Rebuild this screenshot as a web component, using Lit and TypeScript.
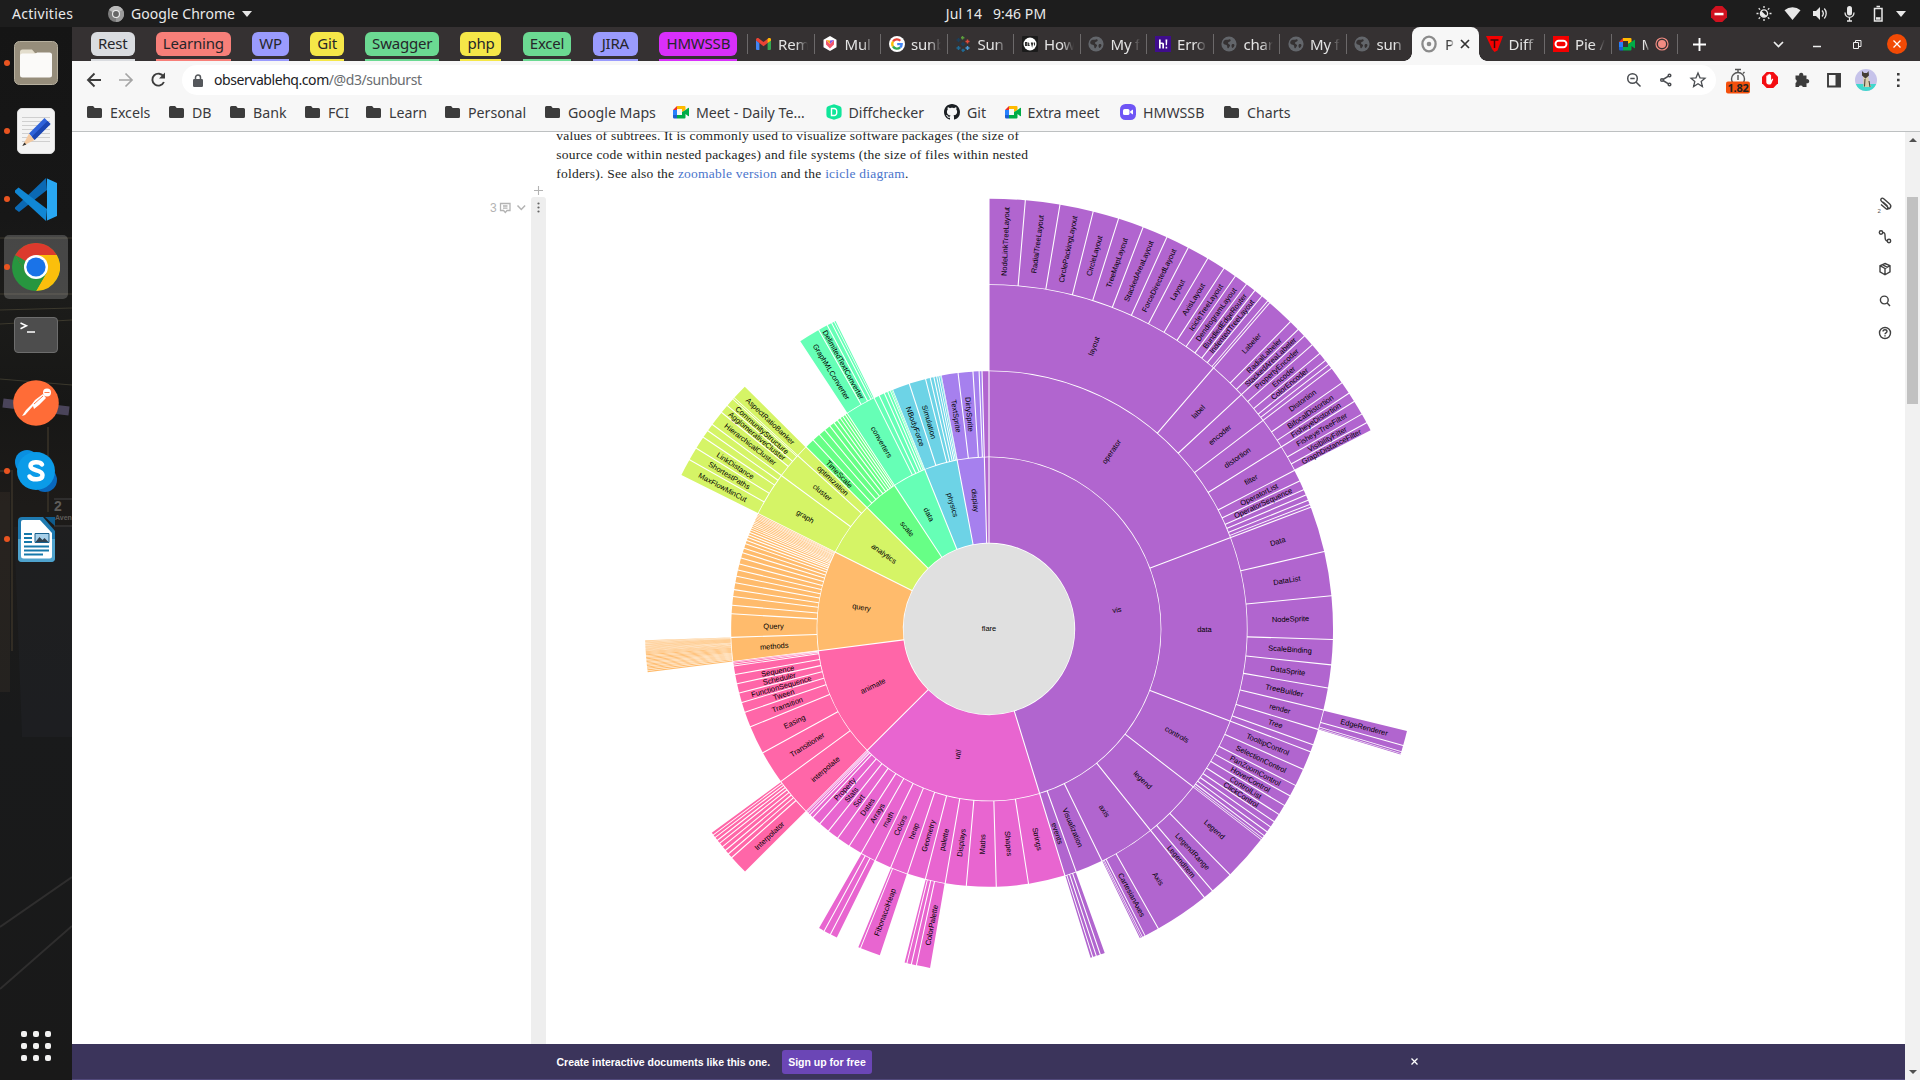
import { LitElement, html, css, svg, TemplateResult } from "lit";
import { customElement } from "lit/decorators.js";

/* ---------- data: package hierarchy ---------- */

type Leaf = [string, number];
type Branch = [string, Item[]];
type Item = Leaf | Branch;

const leaves = (s: string): Leaf[] =>
  s.trim().split(/\s+/).map((t) => {
    const [n, v] = t.split(":");
    return [n, Number(v)] as Leaf;
  });

const FLARE: Branch = ["flare", [
  ["analytics", [
    ["cluster", leaves("AgglomerativeCluster:3938 CommunityStructure:3812 HierarchicalCluster:6714 MergeEdge:743")],
    ["graph", leaves("BetweennessCentrality:3534 LinkDistance:5731 MaxFlowMinCut:7840 ShortestPaths:5914 SpanningTree:3416")],
    ["optimization", leaves("AspectRatioBanker:7074")],
  ]],
  ["animate", [
    ...leaves("Easing:17010 FunctionSequence:5842"),
    ["interpolate", leaves("ArrayInterpolator:1983 ColorInterpolator:2047 DateInterpolator:1375 Interpolator:8746 MatrixInterpolator:2202 NumberInterpolator:1382 ObjectInterpolator:1629 PointInterpolator:1675 RectangleInterpolator:2042")],
    ...leaves("ISchedulable:1041 Parallel:5176 Pause:449 Scheduler:5593 Sequence:5534 Transition:9201 Transitioner:19975 TransitionEvent:1116 Tween:6006"),
  ]],
  ["data", [
    ["converters", leaves("Converters:721 DelimitedTextConverter:4294 GraphMLConverter:9800 IDataConverter:1314 JSONConverter:2220")],
    ...leaves("DataField:1759 DataSchema:2165 DataSet:586 DataSource:3331 DataTable:772 DataUtil:3322"),
  ]],
  ["display", leaves("DirtySprite:8833 LineSprite:1732 RectSprite:3623 TextSprite:10066")],
  ["flex", leaves("FlareVis:4116")],
  ["physics", leaves("DragForce:1082 GravityForce:1336 IForce:319 NBodyForce:10498 Particle:2822 Simulation:9983 Spring:2213 SpringForce:1681")],
  ["query", [
    ...leaves("AggregateExpression:1616 And:1027 Arithmetic:3891 Average:891 BinaryExpression:2893 Comparison:5103 CompositeExpression:3677 Count:781 DateUtil:4141 Distinct:933 Expression:5130 ExpressionIterator:3617 Fn:3240 If:2732 IsA:2039 Literal:1214 Match:3748 Maximum:843"),
    ["methods", leaves("add:593 and:330 average:287 count:277 distinct:292 div:595 eq:594 fn:460 gt:603 gte:625 iff:748 isa:461 lt:597 lte:619 max:283 min:283 mod:591 mul:603 neq:599 not:386 or:323 orderby:307 range:772 select:296 stddev:363 sub:600 sum:280 update:307 variance:335 where:299 xor:354 _:264")],
    ...leaves("Minimum:843 Not:1554 Or:970 Query:13896 Range:1594 StringUtil:4130 Sum:791 Variable:1124 Variance:1876 Xor:1101"),
  ]],
  ["scale", leaves("IScaleMap:2105 LinearScale:1316 LogScale:3151 OrdinalScale:3770 QuantileScale:2435 QuantitativeScale:4839 RootScale:1756 Scale:4268 ScaleType:1821 TimeScale:5833")],
  ["util", [
    ...leaves("Arrays:8258 Colors:10001 Dates:8217 Displays:12555 Filter:2324 Geometry:10993"),
    ["heap", leaves("FibonacciHeap:9354 HeapNode:1233")],
    ...leaves("IEvaluable:335 IPredicate:383 IValueProxy:874"),
    ["math", leaves("DenseMatrix:3165 IMatrix:2815 SparseMatrix:3366")],
    ...leaves("Maths:17705 Orientation:1486"),
    ["palette", leaves("ColorPalette:6367 Palette:1229 ShapePalette:2059 SizePalette:2291")],
    ...leaves("Property:5559 Shapes:19118 Sort:6887 Stats:6557 Strings:22026"),
  ]],
  ["vis", [
    ["axis", leaves("Axes:1302 Axis:24593 AxisGridLine:652 AxisLabel:636 CartesianAxes:6703")],
    ["controls", leaves("AnchorControl:2138 ClickControl:3824 Control:1353 ControlList:4665 DragControl:2649 ExpandControl:2832 HoverControl:4896 IControl:763 PanZoomControl:5222 SelectionControl:7862 TooltipControl:8435")],
    ["data", [
      ...leaves("Data:20544 DataList:19788 DataSprite:10349 EdgeSprite:3301 NodeSprite:19382"),
      ["render", leaves("ArrowType:698 EdgeRenderer:5569 IRenderer:353 ShapeRenderer:2247")],
      ...leaves("ScaleBinding:11275 Tree:7147 TreeBuilder:9930"),
    ]],
    ["events", leaves("DataEvent:2313 SelectionEvent:1880 TooltipEvent:1701 VisualizationEvent:1117")],
    ["legend", leaves("Legend:20859 LegendItem:4614 LegendRange:10530")],
    ["operator", [
      ["distortion", leaves("BifocalDistortion:4461 Distortion:6314 FisheyeDistortion:3444")],
      ["encoder", leaves("ColorEncoder:3179 Encoder:4060 PropertyEncoder:4138 ShapeEncoder:1690 SizeEncoder:1830")],
      ["filter", leaves("FisheyeTreeFilter:5219 GraphDistanceFilter:3165 VisibilityFilter:3509")],
      ...leaves("IOperator:1286"),
      ["label", leaves("Labeler:9956 RadialLabeler:3899 StackedAreaLabeler:3202")],
      ["layout", leaves("AxisLayout:6725 BundledEdgeRouter:3727 CircleLayout:9317 CirclePackingLayout:12003 DendrogramLayout:4853 ForceDirectedLayout:8411 IcicleTreeLayout:4864 IndentedTreeLayout:3174 Layout:7881 NodeLinkTreeLayout:12870 PieLayout:2728 RadialTreeLayout:12348 RandomLayout:870 StackedAreaLayout:9121 TreeMapLayout:9191")],
      ...leaves("Operator:2490 OperatorList:5248 OperatorSequence:4190 OperatorSwitch:2581 SortOperator:2023"),
    ]],
    ...leaves("Visualization:16540"),
  ]],
]];

const BRANCH_COLORS: Record<string, string> = {
  vis: "#b165cf", util: "#e865d0", animate: "#ff66a8", query: "#ffbb6c", analytics: "#d5f466",
  scale: "#67ff86", data: "#66ffb6", physics: "#6dd3e6", display: "#a680ee", flex: "#b165cf",
};

/* ---------- partition layout ---------- */

interface Slice { name: string; depth: number; x0: number; x1: number; color: string; }

const RADIUS = 576;
const RING = RADIUS / 5;

const total = (n: Item): number =>
  typeof n[1] === "number" ? n[1] : n[1].reduce((s, c) => s + total(c), 0);

function partition(node: Item, depth: number, x0: number, x1: number, color: string, out: Slice[]) {
  out.push({ name: node[0], depth, x0, x1, color });
  if (typeof node[1] === "number") return;
  const sum = total(node);
  let x = x0;
  for (const child of [...node[1]].sort((a, b) => total(b) - total(a))) {
    const w = ((x1 - x0) * total(child)) / sum;
    partition(child, depth + 1, x, x + w, depth === 0 ? BRANCH_COLORS[child[0]] : color, out);
    x += w;
  }
}

const SLICES: Slice[] = [];
partition(FLARE, 0, 0, 2 * Math.PI, "#e0e0e0", SLICES);

function arcPath(d: Slice): string {
  const r0 = d.depth * RING;
  const r1 = r0 + RING - 1;
  const pad = Math.min((d.x1 - d.x0) / 2, 0.005) / 2;
  const p0 = Math.asin((RADIUS / 2 / r0) * Math.sin(pad));
  const p1 = Math.asin((RADIUS / 2 / r1) * Math.sin(pad));
  const pt = (a: number, r: number) => `${(r * Math.sin(a)).toFixed(3)},${(-r * Math.cos(a)).toFixed(3)}`;
  const big = d.x1 - d.x0 > Math.PI ? 1 : 0;
  return `M${pt(d.x0 + p1, r1)}A${r1},${r1} 0 ${big} 1 ${pt(d.x1 - p1, r1)}L${pt(d.x1 - p0, r0)}A${r0},${r0} 0 ${big} 0 ${pt(d.x0 + p0, r0)}Z`;
}

@customElement("sunburst-chart")
class SunburstChart extends LitElement {
  static styles = css`
    :host { display: block; }
    svg { display: block; width: 862px; height: 835px; margin-left: 0.850px; }
    .labels { font: 10px "Liberation Sans", Arial, sans-serif; text-anchor: middle; fill: #000; }
  `;
  render() {
    return html`<svg viewBox="-576 -576 1152 1116">
      <circle r=${RING - 1} fill="#e0e0e0"></circle>
      ${SLICES.filter((d) => d.depth).map((d) => svg`<path d=${arcPath(d)} fill=${d.color}></path>`)}
      <g class="labels">
        <text dy="0.3em">flare</text>
        ${SLICES.filter((d) => d.depth && (d.depth + 0.5) * RING * (d.x1 - d.x0) > 10).map((d) => {
          const a = (((d.x0 + d.x1) / 2) * 180) / Math.PI;
          return svg`<text transform="rotate(${a - 90}) translate(${(d.depth + 0.5) * RING},0) rotate(${a < 180 ? 0 : 180})" dy="0.35em">${d.name}</text>`;
        })}
      </g>
    </svg>`;
  }
}

/* ---------- shared icons ---------- */

const folder = html`<svg width="15" height="14" viewBox="0 0 15 14"><path fill="#3c3c3c" d="M1.5 1h4.6l1.6 1.9h5.8A1.5 1.5 0 0 1 15 4.400V11.500A1.500 1.500 0 0 1 13.500 13h-12A1.500 1.500 0 0 1 0 11.500V2.500A1.500 1.500 0 0 1 1.500 1z"/></svg>`;
const meet = html`<svg width="16" height="14" viewBox="0 0 16 14"><path fill="#ffba00" d="M4 1h7.500a1 1 0 0 1 1 1v3L9 7V4H4z"/><path fill="#e92e2a" d="M0 5l4-4v4z"/><path fill="#2680fc" d="M0 5h4v5H0z"/><path fill="#1a5fd0" d="M0 10h4v3.500H1.200A1.200 1.200 0 0 1 0 12.300z"/><path fill="#00ac47" d="M4 10h5V7l3.500-2 2.600-2.100c.4-.3.9-.1.9.4v7.400c0 .5-.5.700-.9.400L12.500 9v3.500a1 1 0 0 1-1 1H4z"/></svg>`;
const diffcheck = html`<svg width="16" height="16" viewBox="0 0 16 16"><path fill="#10e69a" d="M8 .3 13.400 2a3 3 0 0 1 2.200 3v6a3 3 0 0 1-2.200 3L8 15.700 2.600 14a3 3 0 0 1-2.200-3V5a3 3 0 0 1 2.200-3z"/><path fill="none" stroke="#fff" stroke-width="1.400" d="M5.500 4.500h2.700a2.500 2.500 0 0 1 2.500 2.500v2a2.500 2.500 0 0 1-2.500 2.500H5.500z"/></svg>`;
const github = html`<svg width="16" height="16" viewBox="0 0 16 16"><path fill="#1b1f23" d="M8 0C3.580 0 0 3.580 0 8c0 3.540 2.290 6.530 5.470 7.590.4.070.55-.17.55-.38 0-.19-.01-.82-.01-1.490-2.010.37-2.530-.49-2.690-.94-.09-.23-.48-.94-.82-1.130-.28-.15-.68-.52-.01-.53.63-.01 1.080.58 1.230.82.72 1.210 1.870.87 2.330.66.07-.52.28-.87.51-1.070-1.780-.2-3.640-.89-3.640-3.950 0-.87.31-1.590.82-2.150-.08-.2-.36-1.020.08-2.120 0 0 .67-.21 2.200.82.64-.18 1.320-.27 2-.27s1.360.09 2 .27c1.530-1.040 2.200-.82 2.200-.82.44 1.100.16 1.920.08 2.120.51.56.82 1.270.82 2.150 0 3.070-1.870 3.750-3.650 3.950.29.25.54.73.54 1.480 0 1.070-.01 1.930-.01 2.200 0 .21.15.46.55.38A8.010 8.010 0 0 0 16 8c0-4.420-3.580-8-8-8z"/></svg>`;
const camera = html`<svg width="16" height="16" viewBox="0 0 16 16"><rect width="16" height="16" rx="5.500" fill="#6f55f5"/><rect x="3" y="5" width="6.500" height="6" rx="1.600" fill="#fff"/><path fill="#fff" d="m10.200 7.200 2.800-1.700v5l-2.800-1.700z"/></svg>`;

const globe = html`<svg width="16" height="16" viewBox="0 0 16 16"><circle cx="8" cy="8" r="7.600" fill="#63666b"/><path fill="#353132" d="M3.500 4.200c2-.9 3.300.1 4.300-.7 1.200-1 2.300.2 1.800 1.300-.6 1.300-2.400.8-2.600 2.100-.1 1 1.200 1.100 1.900 1.900.6.900-.5 2-1.100 2.900-.7 1-1.500.7-1.500-.5 0-1.500-.5-2.200-1.600-2.500C3.200 8.300 2 7.700 2.200 6.400c.2-.9.500-1.800 1.300-2.200z"/><path fill="#353132" d="M11 8.300c1.100-.5 2.300-.1 2.500.9-.5 1.800-1.300 2.600-2.300 2.800-.8-.9-1-2.800-.2-3.700z"/></svg>`;
const gmail = html`<svg width="15" height="12" viewBox="0 0 15 12"><path fill="#4285f4" d="M0 2v9a1 1 0 0 0 1 1h2.400V5z"/><path fill="#34a853" d="M11.600 12H14a1 1 0 0 0 1-1V2l-3.400 3z"/><path fill="#ea4335" d="M0 1.800C0 .3 1.700-.4 2.900.5L7.500 4 12.100.5C13.300-.4 15 .3 15 1.800v.6l-3.400 2.700L7.500 8.200 3.400 5.100 0 2.400z"/><path fill="#fbbc04" d="M11.600 1v4L15 2.400v-.6C15 .300 13.300-.400 12.100.500z"/></svg>`;
const shield = html`<svg width="14" height="15" viewBox="0 0 14 15"><path fill="#fff" d="M7 0l6.500 3.700v7.500L7 15 .5 11.200V3.700z"/><path fill="#f2566c" d="M3 4l4 4 4-4v4.500L7 12.500 3 8.500z"/><path fill="#f7a51d" d="M3 4l4 4v-3.500z"/><path fill="#8353e0" d="M11 4 7 8V4.500z"/></svg>`;
const google = html`<svg width="16" height="16" viewBox="0 0 16 16"><circle cx="8" cy="8" r="8" fill="#fff"/><g fill="none" stroke-width="2.300"><path stroke="#ea4335" d="M4 5.500A4.700 4.700 0 0 1 11.300 4.700"/><path stroke="#fbbc05" d="M4 5.500a4.700 4.700 0 0 0 0 5"/><path stroke="#34a853" d="M4 10.500a4.700 4.700 0 0 0 7.100.9"/><path stroke="#4285f4" d="M8.200 8.200h4.500c0 1.300-.6 2.400-1.600 3.200"/></g></svg>`;
const tableau = html`<svg width="16" height="16" viewBox="0 0 16 16" fill="none" stroke-width="1.500"><path stroke="#1f6b96" d="M3.500 10v4M1.500 12h4M8 12.800V16M6.500 14.300h3.400"/><path stroke="#1b3f5c" d="M3.500 2v4M1.500 4h4M6 8h4M8 6v4"/><path stroke="#e04a3a" d="M12.500 3.500v4M10.500 5.500h4"/><path stroke="#5b9a3c" d="M7.500 0v3.400M6 1.700h3.400"/><path stroke="#4a9bd6" d="M12.500 10v4M10.500 12h4"/></svg>`;
const dev = html`<svg width="16" height="16" viewBox="0 0 16 16"><rect width="16" height="16" rx="1" fill="#1b1b1b"/><circle cx="8" cy="8" r="6.500" fill="#fff"/><path stroke="#333" stroke-width="1.100" fill="none" d="M3.500 6.500h1.200v3H3.500zM6.300 6.500v3h1.400M6.300 8h1.200M9.300 6.500l.8 3 .8-3M12.500 6.500v3"/></svg>`;
const hex = html`<svg width="16" height="16" viewBox="0 0 16 16"><rect width="16" height="16" fill="#3f0d8c"/><path fill="#fff" d="M4 3.500h1.700v3h1.500c1.300 0 1.800.8 1.800 1.800v4.200H7.300V8.600c0-.5-.2-.7-.7-.7h-.9v4.600H4zM10.500 3.500h1.800l-.3 5.800h-1.200zM10.600 10.700h1.600v1.700h-1.600z"/></svg>`;
const observable = html`<svg width="16" height="18" viewBox="0 0 16 18"><ellipse cx="8" cy="9" rx="6.600" ry="7.300" fill="none" stroke="#8b8b8b" stroke-width="2.300"/><circle cx="8" cy="9" r="2.300" fill="#8b8b8b"/></svg>`;
const tri = html`<svg width="17" height="16" viewBox="0 0 17 16"><path fill="#f40000" d="M0 0h17l-5.500 14.500L8.500 16 6 13z"/><path stroke="#3a0808" stroke-width="1.500" fill="none" d="M4.500 4h8M8.500 4v8"/></svg>`;
const oracle = html`<svg width="16" height="16" viewBox="0 0 16 16"><rect width="16" height="16" fill="#f40000"/><rect x="2.500" y="4.800" width="11" height="6.400" rx="3.200" fill="none" stroke="#fff" stroke-width="1.900"/></svg>`;

/* ---------- desktop top bar ---------- */

@customElement("desktop-bar")
class DesktopBar extends LitElement {
  static styles = css`
    :host { display: grid; grid-template-columns: 1fr auto 1fr; align-items: center; height: 27px; background: #1d1d1d; color: #eaeaea; font: 14px "Noto Sans", sans-serif; }
    .left, .right { display: flex; align-items: center; }
    .left { padding-left: 12px; }
    .activities { width: 96px; letter-spacing: 0.3px; }
    .app { margin-left: 7px; letter-spacing: 0.05px; }
    .caret { margin-left: 7px; }
    .clock { display: flex; gap: 11px; transform: translateX(36px); letter-spacing: 0.080px; }
    .right { justify-content: flex-end; padding-right: 5px; }
    .right svg { flex: none; }
  `;
  render() {
    return html`
      <div class="left">
        <span class="activities">Activities</span>
        <svg width="16" height="16" viewBox="0 0 16 16"><circle cx="8" cy="8" r="8" fill="#7d7d7d"/><path fill="#b9b9b9" d="M8 8 1 4a8 8 0 0 1 14 0z"/><path fill="#9a9a9a" d="M8 8l7-4a8 8 0 0 1-7 12z"/><circle cx="8" cy="8" r="4" fill="#eee"/><circle cx="8" cy="8" r="2.900" fill="#666"/></svg>
        <span class="app">Google Chrome</span>
        <svg class="caret" width="10" height="6" viewBox="0 0 10 6"><path fill="#e6e6e6" d="M0 0h10L5 6z"/></svg>
      </div>
      <div class="clock"><span>Jul 14</span><span>9:46 PM</span></div>
      <div class="right">
        <svg width="16" height="16" viewBox="0 0 16 16"><path fill="#d0111f" d="M4.700 0h6.600L16 4.700v6.600L11.300 16H4.700L0 11.300V4.700z"/><path fill="#fff" d="M3.500 6.800h9v2.500h-9z"/></svg>
        <svg width="74" height="17" viewBox="0 0 74 17" fill="none" stroke="#e8e8e8"><g transform="translate(37 8.500)" stroke-width="1.300"><path d="M0-7.500v2M0 5.500v2M-7.500 0h2M5.500 0h2M-5.300-5.300l1.400 1.400M3.900 3.900l1.400 1.400M-5.300 5.300l1.400-1.400M3.900-3.900l1.400-1.400"/><circle r="3.600"/><path fill="#e8e8e8" stroke="none" d="M-2.600-2.600a3.700 3.700 0 0 0 5.200 5.200z"/></g><path fill="#e8e8e8" stroke="none" d="M65.500 15 57.500 5.200a12.500 12.500 0 0 1 16 0z"/></svg>
        <svg width="114" height="17" viewBox="0 0 114 17" fill="none" stroke="#e8e8e8"><path fill="#e8e8e8" stroke="none" d="M12 6h3l4-4v13l-4-4h-3z"/><path stroke-width="1.300" d="M21 5.500a4.500 4.500 0 0 1 0 6M23.300 3.500a7.500 7.500 0 0 1 0 10"/><rect x="46" y="1" width="5" height="9.500" rx="2.500" fill="#e8e8e8" stroke="none"/><path stroke-width="1.300" d="M44 7.500c0 6.400 9 6.400 9 0M48.500 12.500v3.500M46 16h5"/><path stroke-width="1.500" d="M73.500 3.500h7.500v12.500h-7.500zM75.500 1.500h3.500"/><path fill="#e8e8e8" stroke="none" d="M75 12.200h4.500v2.500H75z"/><path fill="#e8e8e8" stroke="none" d="M95 6h10l-5 6z"/></svg>
      </div>`;
  }
}

/* ---------- dock ---------- */

@customElement("app-dock")
class AppDock extends LitElement {
  static styles = css`
    :host { display: flex; flex-direction: column; justify-content: space-between; width: 72px; background: linear-gradient(#151515 0, #171717 190px, #1c1c1a 270px, #171716 380px, #1d1b19 480px, #191a1b 700px, #191919 100%); position: relative; overflow: hidden; }
    .wall { position: absolute; inset: 0; }
    .apps { display: flex; flex-direction: column; gap: 4px; padding-top: 4px; position: relative; }
    .app { height: 64px; width: 64px; margin-left: 4px; display: grid; place-items: center; border-radius: 5px; position: relative; }
    .app.on { background: rgba(255, 255, 255, 0.2); }
    .dot { position: absolute; left: 0; top: 29px; width: 6px; height: 6px; border-radius: 3px; background: #e95420; }
    .grid { display: grid; grid-template-columns: repeat(3, 6px); gap: 6px; margin: 0 0 19px 21px; position: relative; }
    .grid i { height: 6px; border-radius: 2px; background: #f2f2f2; }
    .app svg { display: block; }
  `;
  render() {
    const apps: { icon: TemplateResult; dot: boolean; on?: boolean }[] = [
      { dot: true, icon: html`<svg width="44" height="44" viewBox="0 0 44 44"><rect x=".5" y=".5" width="43" height="43" rx="5" fill="#968d7b" stroke="#b7b09f"/><path fill="#e3ddcd" d="M6 11a2.500 2.500 0 0 1 2.500-2.500H18l3 3.500h14v6H6z"/><rect x="6" y="12.500" width="32" height="24" rx="2.500" fill="#fbfaf9"/><path fill="#fbfaf9" d="M6 15h14l3-3.500h12.500A2.500 2.500 0 0 1 38 14v5H6z"/></svg>` },
      { dot: true, icon: html`<svg width="38" height="46" viewBox="0 0 38 46"><rect x=".5" y=".5" width="37" height="45" rx="4.500" fill="#f3f3f3" stroke="#ddd"/><path stroke="#cfcfcf" d="M5 9.500h28M5 13.500h28M5 17.500h28M5 21.500h28M5 25.500h28M5 29.500h28M5 33.500h28"/><path fill="#2f62d9" d="M12 25.500 27.500 10l6 6L17.500 32z"/><path fill="#1c46b2" d="m14.500 29 16-16 3 3L17.500 32z"/><path fill="#f4c9a0" d="m12 25.500 5.500 6.500L5.500 38z"/><path fill="#333" d="m7.400 34.500 2 2L5.300 38z"/></svg>` },
      { dot: true, icon: html`<svg width="42" height="43" viewBox="0 0 42 43"><path fill="#0b69b4" d="M0 29.500 31 0l1 12L4 34 0 31z"/><path fill="#1187d4" d="M0 12.500 3.500 9.500 32 31l-1 12L0 14.500z"/><path fill="#29a7f2" d="M31 0 42 5v33l-11 5c1-.3 1-1 1-2V2c0-1 0-1.700-1-2z"/></svg>` },
      { dot: true, on: true, icon: html`<svg width="48" height="48" viewBox="0 0 48 48"><circle cx="24" cy="24" r="24" fill="#27963f"/><path fill="#dc3a2d" d="M24 24 3.200 12A24 24 0 0 1 44.800 12z"/><path fill="#fbbf0c" d="M24 12h20.800A24 24 0 0 1 24 48l10.400-18z"/><path fill="#dc3a2d" d="M3.200 12 13.600 30 24 12z"/><path fill="#27963f" d="m3.200 12 10.400 18L24 48l10.400-18z"/><circle cx="24" cy="24" r="12" fill="#fff"/><circle cx="24" cy="24" r="9.600" fill="#1a73e8"/></svg>` },
      { dot: false, icon: html`<svg width="44" height="36" viewBox="0 0 44 36"><rect x=".5" y=".5" width="43" height="35" rx="3.500" fill="#4d4d4d" stroke="#6d6d6d"/><path fill="none" stroke="#fff" stroke-width="1.500" d="m6.500 6 6 2.800-6 2.900M13 15h8"/></svg>` },
      { dot: false, icon: html`<svg width="46" height="46" viewBox="0 0 46 46"><circle cx="23" cy="23" r="22.800" fill="#ff6c37"/><circle cx="34" cy="12.500" r="4" fill="#fff"/><path fill="#fff" d="m22 20 8-6 3 4-7 7-5 4-1-3-8 9-3 1 4-6 6-6z"/><path stroke="#ff6c37" stroke-width=".9" fill="none" d="m21 24 9-8M31.500 12.500h5"/></svg>` },
      { dot: true, icon: html`<svg width="42" height="42" viewBox="0 0 42 42"><circle cx="12" cy="12" r="12" fill="#0a8fe0"/><circle cx="30" cy="30" r="12" fill="#0967bd"/><circle cx="21" cy="21" r="19" fill="#0b9be8"/><path fill="none" stroke="#fff" stroke-width="4.500" stroke-linecap="round" d="M27 14.500c-2-3-11.500-3.200-11.500 1.500 0 5.500 12 3.200 12 9 0 5.500-10.500 5.500-13 1.500"/></svg>` },
      { dot: true, icon: html`<svg width="37" height="45" viewBox="0 0 37 45"><path fill="#1f7ab0" d="M4 0h21l12 14v27a4 4 0 0 1-4 4H4a4 4 0 0 1-4-4V4a4 4 0 0 1 4-4z"/><path fill="#4fa3cd" d="M0 22h37v19a4 4 0 0 1-4 4H4a4 4 0 0 1-4-4z"/><path fill="#0f5b8c" d="M27 0h10v9z"/><path fill="#fff" d="M5 3h17l12 13v23a2.500 2.500 0 0 1-2.500 2.500H5.500A2.500 2.500 0 0 1 3 39V5a2 2 0 0 1 2-2z"/><path stroke="#1578aa" stroke-width="1.800" d="M6 17h8M6 21h8M6 25h8M6 29.500h25M6 33.500h25M6 37.500h19"/><path fill="#a7d0ea" stroke="#17608d" d="M17 16.500h14v9H17z"/><path fill="#314250" d="m17.500 25 4-5 3 3 2-2 4 4z"/></svg>` },
    ];
    return html`
      <svg class="wall" width="72" height="1053" viewBox="0 0 72 1053" fill="none">
        <path stroke="#4a4636" stroke-width="1.200" d="M0 211h72M0 267h72M0 283 72 281M0 297l72-4M0 352l72 6" opacity=".7"/>
        <path stroke="#57506b" stroke-width="9" d="m3 376 66 8" opacity=".8"/>
        <path stroke="#3c352a" stroke-width="2" d="M48 400v85M0 444h12v180" opacity=".7"/>
        <path fill="#3d352a" d="M0 465h10v200H0z" opacity=".35"/>
        <path stroke="#343333" stroke-width="2" d="M54 472h18M54 499h18M0 900 72 850M0 962l72-63" opacity=".8"/>
        <path fill="#22262b" d="M14 500h58v210H22z" opacity=".4"/>
        <text x="54" y="484" fill="#5f5d5a" font-family="Liberation Sans, sans-serif" font-size="14" font-weight="bold">2</text>
        <text x="55" y="493" fill="#5f5d5a" font-family="Liberation Sans, sans-serif" font-size="7" font-weight="bold">Aven</text>
      </svg>
      <div class="apps">
        ${apps.map((a) => html`<div class="app ${a.on ? "on" : ""}">${a.dot ? html`<span class="dot"></span>` : ""}${a.icon}</div>`)}
      </div>
      <div class="grid">${Array.from({ length: 9 }, () => html`<i></i>`)}</div>`;
  }
}

/* ---------- browser tab strip ---------- */

@customElement("tab-strip")
class TabStrip extends LitElement {
  static styles = css`
    :host { display: flex; height: 34px; background: #353132; font: 15px "Noto Sans", sans-serif; color: #e4e4e4; }
    .groups { display: flex; gap: 21.3px; padding-left: 19px; width: 656px; flex: none; }
    .group { display: flex; flex-direction: column; justify-content: space-between; flex: none; padding-top: 5px; }
    .chip { height: 24px; line-height: 23px; border-radius: 6px; text-align: center; color: #26262a; white-space: nowrap; background: var(--c); letter-spacing: -0.2px; }
    .line { height: 2px; background: var(--c); }
    .tab { width: 66.5px; flex: none; display: flex; align-items: center; box-sizing: border-box; padding-bottom: 1px; }
    .tab::before { content: ""; width: 1px; height: 20px; background: #6c696a; margin-right: 7px; }
    .tab.bare::before { background: transparent; }
    .fav { width: 17px; display: grid; place-items: center; flex: none; margin-right: 6px; }
    .fav svg { display: block; }
    .name { flex: 1; overflow: hidden; white-space: nowrap; margin-right: 6px; letter-spacing: -0.2px; -webkit-mask-image: linear-gradient(90deg, #000 60%, transparent); mask-image: linear-gradient(90deg, #000 60%, transparent); }
    .active { background: #f7f7f7; color: #444; border-radius: 8px 8px 0 0; position: relative; margin-right: -1px; padding-bottom: 0; }
    .active::before { display: none; }
    .active .fav { margin-left: 8px; margin-right: 8px; }
    .active .name { flex: none; width: 9px; margin-right: 6px; }
    .foot { position: absolute; bottom: 0; width: 8px; height: 8px; }
    .foot.l { left: -8px; background: radial-gradient(circle at 0 0, transparent 7.500px, #f7f7f7 8px); }
    .foot.r { right: -8px; background: radial-gradient(circle at 100% 0, transparent 7.500px, #f7f7f7 8px); }
    .rec { flex: none; margin-right: 8px; }
    .plus { border-left: 1px solid #6c696a; height: 20px; margin: 7px 0 0 0; padding-left: 15px; display: flex; align-items: center; }
    .window { margin-left: auto; display: flex; align-items: center; flex: none; }
  `;
  render() {
    const groups: [string, string, number][] = [
      ["Rest", "#dadce0", 43.5], ["Learning", "#f77f79", 75], ["WP", "#9a9bfd", 37], ["Git", "#f5e748", 33.5],
      ["Swagger", "#6bd992", 74], ["php", "#f5e748", 41], ["Excel", "#6bd992", 48.5], ["JIRA", "#9a9bfd", 45.5], ["HMWSSB", "#d92ffb", 78],
    ];
    const tabs: [TemplateResult, string][] = [
      [gmail, "Rem"], [shield, "Mul"], [google, "sunb"], [tableau, "Sun"], [dev, "How"], [globe, "My f"], [hex, "Erro"], [globe, "char"], [globe, "My f"], [globe, "sun"],
    ];
    const rest: [TemplateResult, string][] = [[tri, "Diff"], [oracle, "Pie /"]];
    const tab = ([icon, name]: [TemplateResult, string], bare = false) =>
      html`<div class="tab ${bare ? "bare" : ""}"><span class="fav">${icon}</span><span class="name">${name}</span></div>`;
    return html`
      <div class="groups">
        ${groups.map(([n, c, w]) => html`<div class="group" style="--c:${c};width:${w}px"><span class="chip">${n}</span><span class="line"></span></div>`)}
      </div>
      ${tabs.map((t) => tab(t))}
      <div class="tab active"><i class="foot l"></i><span class="fav">${observable}</span><span class="name">P</span>
        <svg width="10" height="10" viewBox="0 0 10 10"><path stroke="#333" stroke-width="1.700" d="m1 1 8 8M9 1 1 9"/></svg><i class="foot r"></i></div>
      ${rest.map((t, i) => tab(t, i === 0))}
      <div class="tab"><span class="fav">${meet}</span><span class="name">M</span>
        <svg class="rec" width="14" height="14" viewBox="0 0 14 14"><circle cx="7" cy="7" r="6" fill="none" stroke="#f28b82" stroke-width="1.200"/><circle cx="7" cy="7" r="4" fill="#f28b82"/></svg></div>
      <div class="plus"><svg width="13" height="13" viewBox="0 0 13 13"><path stroke="#fff" stroke-width="1.900" d="M6.500 0v13M0 6.500h13"/></svg></div>
      <div class="window">
        <svg width="148" height="24" viewBox="0 0 148 24" fill="none" stroke="#eee"><path stroke-width="1.700" d="m2 10 4.500 4.500L11 10"/><path stroke-width="1.500" d="M41 14.500h8"/><path stroke-width="1" d="M81.500 10.500h5v6h-5zM83.500 10.500v-2h5.500v6h-2.500"/><circle cx="125" cy="12" r="10" fill="#f24a05" stroke="none"/><path stroke="#fff" stroke-width="1.300" d="m121.500 8.500 7 7M128.500 8.500l-7 7"/></svg>
      </div>`;
  }
}

/* ---------- toolbar and bookmarks ---------- */

@customElement("browser-toolbar")
class BrowserToolbar extends LitElement {
  static styles = css`
    :host { display: flex; flex-direction: column; height: 71px; box-sizing: border-box; background: #f7f7f7; border-bottom: 1px solid #bdc0c1; font: 14.200px "Noto Sans", sans-serif; color: #3a3a3d; }
    .bar { display: flex; align-items: center; padding-top: 4px; height: 30px; }
    .nav { width: 110px; flex: none; }
    .omni { width: 1534px; height: 30px; box-sizing: border-box; border-radius: 15px; background: #fff; display: flex; align-items: center; padding: 0 9px 0 11px; flex: none; }
    .url { margin: -2px 0 0 11px; color: #202124; flex: 1; font-size: 14px; letter-spacing: -0.440px; }
    .url span { color: #6a6d70; }
    .tools { display: block; flex: none; }
    .badge { font: bold 11px "Noto Sans", sans-serif; fill: #222; letter-spacing: -0.3px; }
    .marks { display: flex; padding: 4px 0 0 15px; height: 26px; }
    .mark { display: flex; align-items: center; flex: none; white-space: nowrap; }
    .mark .ic { width: 23px; display: flex; align-items: center; flex: none; }
    svg { display: block; }
  `;
  render() {
    const marks: [TemplateResult, string, number][] = [
      [folder, "Excels", 82], [folder, "DB", 61], [folder, "Bank", 75], [folder, "FCI", 61], [folder, "Learn", 79], [folder, "Personal", 100], [folder, "Google Maps", 128],
      [meet, "Meet - Daily Te…", 152.5], [diffcheck, "Diffchecker", 118.5], [github, "Git", 60.5], [meet, "Extra meet", 115.5], [camera, "HMWSSB", 104], [folder, "Charts", 90],
    ];
    return html`
      <div class="bar">
        <svg class="nav" width="110" height="30" viewBox="0 0 110 30" fill="none"><path stroke="#3c3c3c" stroke-width="1.900" d="M29 15H16M22.500 8.500 16 15l6.500 6.500"/><path stroke="#a5a5a5" stroke-width="1.700" d="M47 15h13M53.500 8.500 60 15l-6.500 6.500"/><path stroke="#3c3c3c" stroke-width="1.900" d="M91.500 11.500a6 6 0 1 0 .4 5.500"/><path fill="#3c3c3c" d="M93 7.500v6h-6z"/></svg>
        <div class="omni">
          <svg width="10" height="13" viewBox="0 0 10 13"><rect y="5" width="10" height="8" rx="1.200" fill="#55585c"/><path fill="none" stroke="#55585c" stroke-width="1.500" d="M2.500 5.500v-2a2.500 2.500 0 0 1 5 0v2"/></svg>
          <span class="url">observablehq.com<span>/@d3/sunburst</span></span>
          <svg width="82" height="18" viewBox="0 0 82 18" fill="none" stroke="#4a4d51" stroke-width="1.500"><circle cx="7.500" cy="7.500" r="4.800"/><path d="m11 11 4.500 4.500M5.300 7.500h4.400"/><circle cx="37" cy="9" r="1.300"/><circle cx="44.500" cy="4.500" r="1.300"/><circle cx="44.500" cy="13.500" r="1.300"/><path d="m38 8.500 5.500-3.400M38 9.500l5.500 3.400"/><path stroke-width="1.300" d="m73 2 2 4.800 5 .4-3.800 3.300 1.200 5L73 12.800 68.600 15.500l1.200-5L66 7.200l5-.4z"/></svg>
        </div>
        <svg class="tools" width="204" height="30" viewBox="0 0 204 30" fill="none">
          <circle cx="22" cy="14" r="6.500" stroke="#555" stroke-width="1.400"/><path stroke="#555" stroke-width="1.400" d="M22 15v-5M19 4.500h6M22 5v3M27 8.500l1.500-1.500"/>
          <rect x="10" y="16.500" width="24" height="12" rx="2" fill="#f4500c"/><text class="badge" x="22" y="26.500" text-anchor="middle">1.82</text>
          <path fill="#f40d12" d="M50.700 7h6.600l4.700 4.700v6.600L57.300 23h-6.600L46 18.300v-6.600z"/><path fill="#fff" d="M50.300 14.500v-3.300c0-.8 1.100-.8 1.100 0V10c0-.8 1.200-.8 1.200 0v-.6c0-.8 1.300-.8 1.300 0v.8c0-.8 1.200-.8 1.200 0v5l.9-1.200c.5-.7 1.400-.2 1.100.5l-1.600 3.700c-.4.900-1 1.300-2 1.300h-.8c-1.500 0-2.400-1-2.400-2.500z"/>
          <path fill="#3c3c3c" d="M79.500 10.500h3.700a2.100 2.100 0 1 1 4 0h3.300v3.700a2.100 2.100 0 1 1 0 4v3.800h-3.700a2.100 2.100 0 0 0-4 0h-3.300v-4a2.100 2.100 0 0 0 0-3.800z"/>
          <path stroke="#3c3c3c" stroke-width="1.900" d="M112 9h12v12.500h-12z"/><path fill="#3c3c3c" d="M119.500 9h5v12.500h-5z"/>
          <circle cx="150" cy="15" r="11" fill="#c6c3ea"/><path fill="#3fd8cd" d="M139.800 19h20.400a11 11 0 0 1-20.400 0z"/><path fill="#d9cfae" d="M147 9l5 2 2 8 1.500 3h-8z"/><path fill="#443d35" d="m146 6 2 2h3l1.500-2 .5 4.500-3.500 3-3.500-3z"/><path stroke="#443d35" d="M149 14l-.5 7.500M153 16l1 6"/>
          <path fill="#3c3c3c" d="M181 8h2.600v2.600H181zM181 13.700h2.600v2.600H181zM181 19.400h2.600V22H181z"/>
        </svg>
      </div>
      <div class="marks">
        ${marks.map(([icon, name, w]) => html`<div class="mark" style="width:${w}px"><span class="ic">${icon}</span>${name}</div>`)}
      </div>`;
  }
}

/* ---------- notebook page ---------- */

@customElement("notebook-page")
class NotebookPage extends LitElement {
  static styles = css`
    :host { display: flex; flex: 1; min-height: 0; background: #fff; }
    .view { flex: 1; display: flex; flex-direction: column; min-width: 0; }
    .body { flex: 1; min-height: 0; overflow: hidden; display: flex; }
    .meta { width: 458px; display: flex; justify-content: flex-end; padding: 67px 1px 0 0; flex: none; }
    .meta svg { display: block; }
    .num { fill: #b3b3b3; font: 12px "Liberation Sans", sans-serif; }
    .rail { width: 15px; display: flex; flex-direction: column; align-items: center; flex: none; padding-top: 54px; }
    .handle { width: 15px; flex: 1; margin-top: 2px; background: #eeeeee; border-radius: 3px 3px 0 0; }
    .cells { flex: none; width: 870px; padding-left: 11.25px; }
    p { margin: -6px 0 0 -1px; height: 72.300px; color: #1b1e23; font: 13.500px/19.100px "Source Serif Pro", "Liberation Serif", serif; letter-spacing: 0.220px; white-space: nowrap; }
    p span { display: block; }
    p a { color: #4a74cb; }
    .side { margin-left: auto; padding: 63.500px 11px 0 0; display: flex; flex-direction: column; gap: 14px; }
    .side svg { display: block; }
    .two { font: 6px "Liberation Sans", sans-serif; fill: #555; stroke: none; }
    .banner { height: 36px; box-sizing: border-box; background: #3b345b; border-bottom: 1px solid #51497a; display: flex; align-items: center; padding-left: 484.500px; font: bold 10.500px "Liberation Sans", Arial, sans-serif; color: #fff; }
    .lead { width: 213.500px; white-space: nowrap; }
    .cta { margin-left: 12px; background: #6b46b6; border-radius: 3px; height: 24px; width: 90px; text-align: center; line-height: 25px; }
    .close { margin-left: 539px; }
    .scroll { width: 15px; background: #f1f1f1; display: flex; flex-direction: column; align-items: center; flex: none; }
    .thumb { width: 11px; height: 207px; background: #c1c1c1; margin-top: 55px; }
    .scroll svg { margin-top: 6px; display: block; }
    .scroll .down { margin-top: auto; margin-bottom: 6px; }
  `;
  render() {
    return html`
      <div class="view">
        <div class="body">
          <div class="meta"><svg width="40" height="16" viewBox="0 0 40 16" fill="none" stroke="#b3b3b3" stroke-width="1.300"><text class="num" stroke="none" x="0" y="12.500">3</text><path d="M10.500 4.500h9.500v7h-3l-1.700 2-1.700-2h-3.100zM13 7h4.500M13 9.200h4.500"/><path stroke-width="1.500" d="m27.500 6.500 3.800 4 3.800-4"/></svg></div>
          <div class="rail">
            <svg width="9" height="9" viewBox="0 0 9 9"><path stroke="#b3b3b3" stroke-width="1.100" d="M4.500 0v9M0 4.500h9"/></svg>
            <div class="handle"><svg width="15" height="22" viewBox="0 0 15 22"><g fill="#666"><circle cx="7.500" cy="6.500" r="1.100"/><circle cx="7.500" cy="10.500" r="1.100"/><circle cx="7.500" cy="14.500" r="1.100"/></g></svg></div>
          </div>
          <div class="cells">
            <p><span>values of subtrees. It is commonly used to visualize software packages (the size of</span><span>source code within nested packages) and file systems (the size of files within nested</span><span>folders). See also the <a>zoomable version</a> and the <a>icicle diagram</a>.</span></p>
            <sunburst-chart></sunburst-chart>
          </div>
          <div class="side">${SIDE_SHAPES.map(sideIcon)}</div>
        </div>
        <div class="banner"><span class="lead">Create interactive documents like this one.</span><span class="cta">Sign up for free</span>
          <svg class="close" width="7" height="7" viewBox="0 0 7 7"><path stroke="#fff" stroke-width="1.300" d="m.5.5 6 6M6.500.5l-6 6"/></svg></div>
      </div>
      <div class="scroll">
        <svg width="8" height="4" viewBox="0 0 8 4"><path fill="#505050" d="M0 4l4-4 4 4z"/></svg>
        <div class="thumb"></div>
        <svg class="down" width="8" height="4" viewBox="0 0 8 4"><path fill="#505050" d="M0 0l4 4 4-4z"/></svg>
      </div>`;
  }
}

const SIDE_SHAPES = [
  svg`<path d="m5 8.500 5 4.300c1.500 1.200 3-.6 1.700-1.900L5.500 5.200C3.600 3.500 5.800 1 7.700 2.700l6 5.400c2.600 2.500-.2 5.800-2.900 4M7 6l4.500 4"/><text class="two" x="1.500" y="16.500">2</text>`,
  svg`<circle cx="5" cy="4.500" r="1.700"/><circle cx="13" cy="13" r="1.700"/><path d="M6.800 4.500c4.500-.5 0 8.500 4.500 8.500"/>`,
  svg`<path d="m9 3.500 5 2.200v6.200L9 14.800l-5-2.900V5.700zM4 5.700l5 2.800 5-2.800M9 8.500v6.300M6.300 4.700l5.200 2.700"/>`,
  svg`<circle cx="8.300" cy="8" r="3.900"/><path d="m11.200 11 2.800 3"/>`,
  svg`<circle cx="9" cy="9" r="5.500"/><path d="M7 7.600c0-2.500 4-2.400 4-.1 0 1.400-2 1.300-2 2.700M9 11.300v1.300"/>`,
];

function sideIcon(shape: unknown): TemplateResult {
  return html`<svg width="18" height="18" viewBox="0 0 18 18" fill="none" stroke="#404040" stroke-width="1.400">${shape}</svg>`;
}

/* ---------- root ---------- */

@customElement("app-root")
class AppRoot extends LitElement {
  static styles = css`
    :host { display: flex; flex-direction: column; width: 1920px; height: 1080px; overflow: hidden; }
    .desk { flex: 1; display: flex; min-height: 0; }
    .browser { flex: 1; display: flex; flex-direction: column; min-width: 0; }
  `;
  render() {
    return html`
      <desktop-bar></desktop-bar>
      <div class="desk">
        <app-dock></app-dock>
        <div class="browser">
          <tab-strip></tab-strip>
          <browser-toolbar></browser-toolbar>
          <notebook-page></notebook-page>
        </div>
      </div>`;
  }
}
